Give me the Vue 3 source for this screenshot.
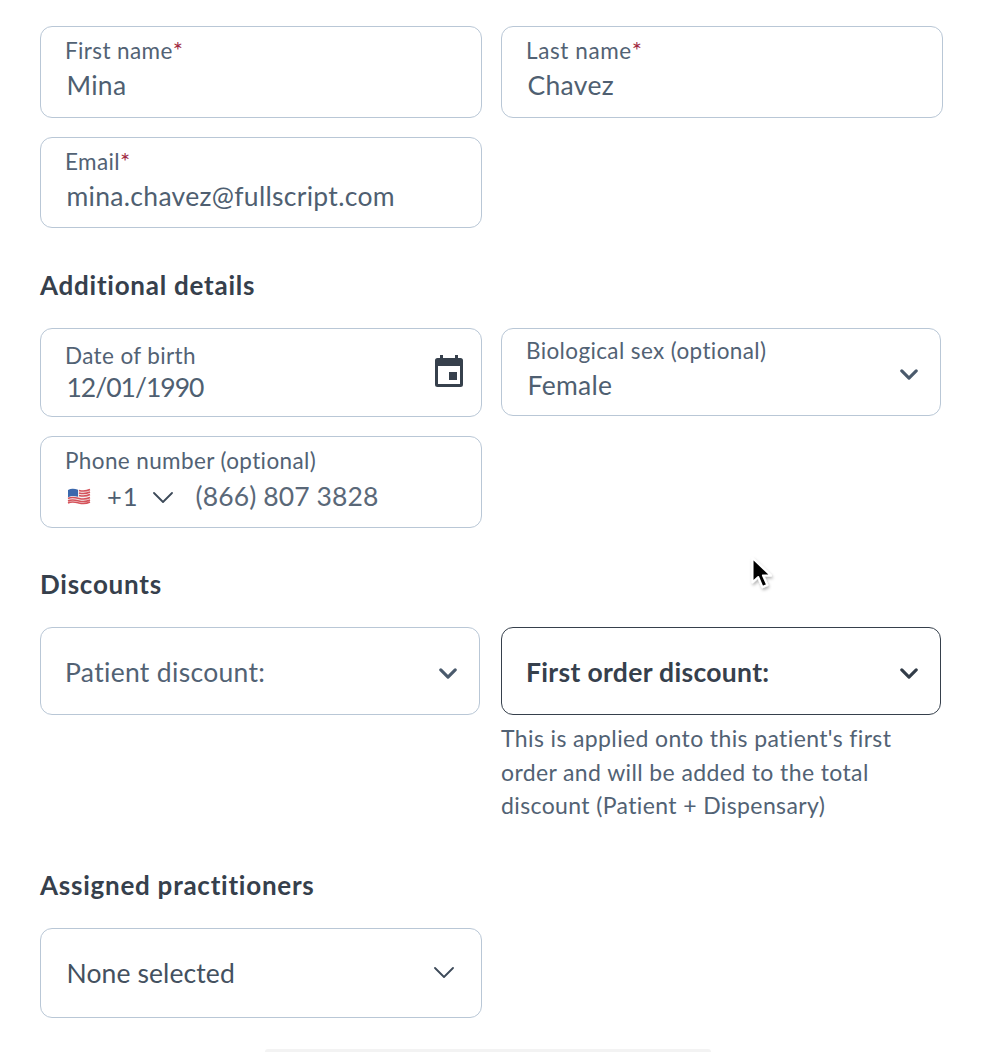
<script setup>
const chevron = 'M1.5 1.5 L7.5 7.5 L13.5 1.5'
</script>

<template>
  <main class="page">
    <div class="row row-names">
      <div class="field wide h92">
        <label class="lab">First name<span class="req">*</span></label>
        <div class="val">Mina</div>
      </div>
      <div class="field wide h92 alt">
        <label class="lab">Last name<span class="req">*</span></label>
        <div class="val">Chavez</div>
      </div>
    </div>
    <div class="row row-email">
      <div class="field wide h91">
        <label class="lab">Email<span class="req">*</span></label>
        <div class="val">mina.chavez@fullscript.com</div>
      </div>
    </div>

    <h2 class="head head-details">Additional details</h2>
    <div class="row row-details">
      <div class="field wide h89 dob">
        <label class="lab">Date of birth</label>
        <div class="val">12/01/1990</div>
        <svg class="cal" width="32" height="34" viewBox="0 0 32 34" aria-hidden="true">
          <path fill="#36404c" d="M7 1h3v3h12V1h3v3h2.500A2.500 2.500 0 0 1 30 6.500v24a2.500 2.500 0 0 1-2.500 2.500h-23A2.500 2.500 0 0 1 2 30.500v-24A2.500 2.500 0 0 1 4.500 4H7zM5 12v18h22V12z"/>
          <rect x="16" y="18" width="8" height="8" fill="#36404c"/>
        </svg>
      </div>
      <div class="field narrow h88 sel bio">
        <label class="lab">Biological sex (optional)</label>
        <div class="val">Female</div>
        <svg class="chev" width="18" height="11" viewBox="0 0 15 9" aria-hidden="true"><path :d="chevron" /></svg>
      </div>
    </div>
    <div class="row row-phone">
      <div class="field wide h92">
        <label class="lab">Phone number (optional)</label>
        <div class="phone">
          <svg class="flag" width="24" height="18" viewBox="0 0 24 18" aria-hidden="true">
            <path fill="#f4f0f0" d="M1 3c4-2 7-1 11 0s7 1 11-1v13c-4 2-7 1-11 0s-7-1-11 1z"/>
            <path fill="none" stroke="#d5525a" stroke-width="1.400" d="M12 3.500c4 1 7 1 11-1M12 6c4 1 7 1 11-1M12 8.500c4 1 7 1 11-1M1 11.500c4-2 7-1 11 0s7 1 11-1M1 14c4-2 7-1 11 0s7 1 11-1M1 16c4-2 7-1 11 0s7 1 11-1"/>
            <path fill="#3b68ad" d="M1 3c3.500-1.800 6.500-1.200 10-.3v7C7.500 9 4.500 8.500 1 10.300z"/>
          </svg>
          <span class="code">+1</span>
          <svg class="chev-thin" width="20" height="11" viewBox="0 0 20 11" aria-hidden="true"><path d="M1 1 L10 10 L19 1" /></svg>
          <span class="num">(866) 807 3828</span>
        </div>
      </div>
    </div>

    <h2 class="head head-discounts">Discounts</h2>
    <div class="row row-discounts">
      <div class="col">
        <div class="field narrow h88 sel mid">
          <div class="plain">Patient discount:</div>
          <svg class="chev" width="18" height="11" viewBox="0 0 15 9" aria-hidden="true"><path :d="chevron" /></svg>
        </div>
      </div>
      <div class="col">
        <div class="field narrow h88 sel mid active">
          <div class="plain strong">First order discount:</div>
          <svg class="chev dark" width="18" height="11" viewBox="0 0 15 9" aria-hidden="true"><path :d="chevron" /></svg>
        </div>
        <p class="help">This is applied onto this patient's first order and will be added to the total discount (Patient + Dispensary)</p>
      </div>
    </div>

    <h2 class="head head-pract">Assigned practitioners</h2>
    <div class="field wide h90 mid none">
      <div class="val">None selected</div>
      <svg class="chev-thin" width="20" height="11" viewBox="0 0 20 11" aria-hidden="true"><path d="M1 1 L10 10 L19 1" /></svg>
    </div>

    <div class="sliver"></div>

    <svg class="cursor" width="28" height="40" viewBox="0 0 26 38" aria-hidden="true">
      <defs>
        <filter id="sh" x="-30%" y="-30%" width="160%" height="160%"><feDropShadow dx="1" dy="2" stdDeviation="1.500" flood-color="#000" flood-opacity=".3"/></filter>
      </defs>
      <path filter="url(#sh)" fill="#000" stroke="#fff" stroke-width="2" stroke-linejoin="round" d="M3 2 V25 L8.500 20 L12.500 29.500 L17 27.500 L13 18.500 H20.500 Z"/>
    </svg>
  </main>
</template>

<style>
html, body { margin: 0; background: #fff; }
</style>

<style scoped>
.page {
  position: relative;
  box-sizing: border-box;
  width: 982px;
  height: 1052px;
  overflow: hidden;
  padding: 26px 0 0 40px;
  background: #fff;
  font-family: Lato, "Noto Sans", sans-serif;
  color: #4f5f71;
}
.row { display: flex; gap: 19px; align-items: flex-start; }
.row-email { margin-top: 19px; }
.row-details { margin-top: 0; }
.row-phone { margin-top: 19px; }
.row-discounts { gap: 21px; }
.col { width: 440px; }
.field {
  position: relative;
  box-sizing: border-box;
  display: flex;
  flex-direction: column;
  background: #fff;
  border: 1px solid #b9c7d6;
  border-radius: 12px;
  padding: 11px 26px 0 24px;
}
.wide { width: 442px; }
.narrow { width: 440px; }
.h92 { height: 92px; }
.h91 { height: 91px; }
.h90 { height: 90px; }
.h89 { height: 89px; }
.h88 { height: 88px; }
.lab {
  font-size: 22.500px;
  line-height: 26px;
  letter-spacing: .38px;
  color: #526274;
  white-space: nowrap;
}
.req { color: #a12a42; font-size: 24px; line-height: 20px; }
.val {
  margin: 3px 0 0 1.500px;
  font-size: 26.500px;
  line-height: 36px;
  letter-spacing: .3px;
  color: #4f5f71;
  white-space: nowrap;
}
.alt .lab { letter-spacing: .6px; }
.dob { padding-top: 14px; }
.dob .val { margin-top: 0; letter-spacing: -1px; }
.bio { padding-top: 9px; }
.bio .val { margin-top: 3px; }
.cal { position: absolute; right: 16px; top: 25px; }
.sel .chev { position: absolute; right: 22px; top: 40px; }
.chev path { fill: none; stroke: #4a5a6c; stroke-width: 2.600; stroke-linecap: round; stroke-linejoin: round; }
.chev.dark path { stroke: #323c48; }
.chev-thin path { fill: none; stroke: #3d4a59; stroke-width: 1.800; stroke-linecap: round; stroke-linejoin: round; }
.phone { display: flex; align-items: center; height: 36px; margin-top: 4px; margin-left: 2px; }
.flag { flex: none; }
.code { margin-left: 16px; font-size: 25.500px; letter-spacing: 1px; color: #4f5f71; }
.phone .chev-thin { margin-left: 14px; margin-top: 2px; }
.num { margin-left: 23px; font-size: 26.500px; letter-spacing: .1px; color: #5a6878; white-space: nowrap; }
.head {
  margin: 0;
  font-size: 26px;
  line-height: 32px;
  font-weight: 700;
  letter-spacing: .75px;
  color: #36404c;
}
.head-details { margin-top: 41px; margin-bottom: 27px; }
.head-discounts { margin-top: 40px; margin-bottom: 27px; }
.head-pract { margin-top: 46px; margin-bottom: 27px; }
.mid { flex-direction: row; align-items: center; padding-top: 0; }
.plain { margin-top: 1px; font-size: 26.500px; letter-spacing: .32px; color: #526274; white-space: nowrap; }
.strong { font-weight: 700; color: #36404c; }
.active { border-color: #36404c; }
.help {
  margin: 7px 0 0;
  font-size: 23px;
  line-height: 33.500px;
  letter-spacing: .38px;
  color: #526274;
  width: 400px;
}
.none { justify-content: space-between; padding-right: 27px; }
.none .val { margin-top: 0; color: #445160; letter-spacing: .1px; }
.sliver {
  position: absolute;
  left: 265px;
  top: 1049px;
  width: 446px;
  height: 3px;
  background: #f3f3f3;
  border-radius: 3px 3px 0 0;
}
.cursor { position: absolute; left: 749px; top: 556px; }
</style>
